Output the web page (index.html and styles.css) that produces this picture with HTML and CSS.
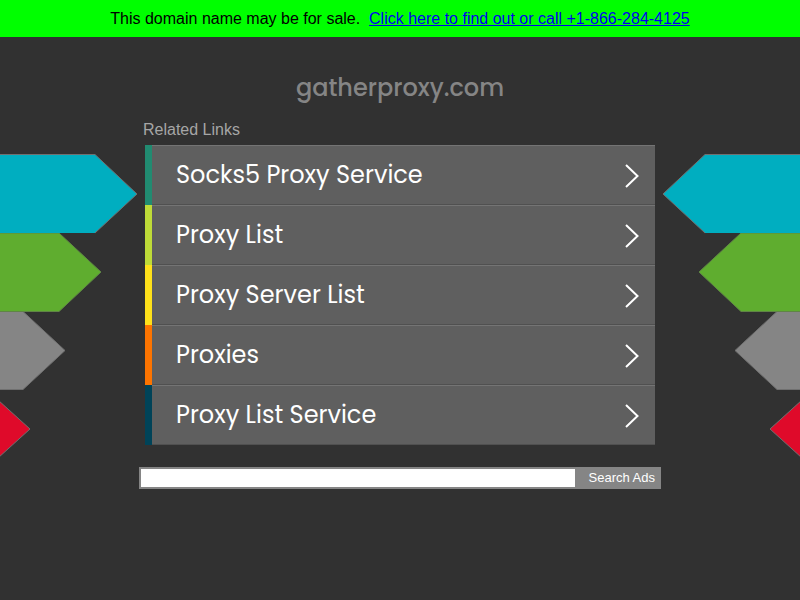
FILE: index.html
```html
<!DOCTYPE html>
<html lang="en">
<head>
<meta charset="utf-8">
<title>gatherproxy.com</title>
<link rel="stylesheet" href="styles.css">
</head>
<body>
<p class="sale-banner">This domain name may be for sale.&nbsp; <a href="#">Click here to find out or call +1-866-284-4125</a></p>
<div class="stage">
  <svg class="arrows" viewBox="0 0 138 304" aria-hidden="true">
    <g stroke="#707070" stroke-width="1">
      <path fill="#858585" d="M-2 157.500H23L65 196.500 23 235.500H-2z"/>
      <path fill="#5fad2f" d="M-2 79H59L101 118 59 157.500H-2z" stroke="#5f8545"/>
      <path fill="#00aec0" stroke="none" d="M-2 .5H95L137 40 95 79H-2z"/>
      <path fill="none" d="M-2 .5H95L137 40 95 79"/>
      <path fill="#df0a2a" d="M-2 246L30 275-2 304z"/>
    </g>
  </svg>
  <main class="content">
    <h1 class="domain">gatherproxy.com</h1>
    <h2 class="related">Related Links</h2>
    <ul class="links">
      <li class="item teal"><a href="#">Socks5 Proxy Service<svg class="chevron" viewBox="0 0 14 24" aria-hidden="true"><path d="M1 1L12.500 12 1 23"/></svg></a></li>
      <li class="item lime"><a href="#">Proxy List<svg class="chevron" viewBox="0 0 14 24" aria-hidden="true"><path d="M1 1L12.500 12 1 23"/></svg></a></li>
      <li class="item yellow"><a href="#">Proxy Server List<svg class="chevron" viewBox="0 0 14 24" aria-hidden="true"><path d="M1 1L12.500 12 1 23"/></svg></a></li>
      <li class="item orange"><a href="#">Proxies<svg class="chevron" viewBox="0 0 14 24" aria-hidden="true"><path d="M1 1L12.500 12 1 23"/></svg></a></li>
      <li class="item navy"><a href="#">Proxy List Service<svg class="chevron" viewBox="0 0 14 24" aria-hidden="true"><path d="M1 1L12.500 12 1 23"/></svg></a></li>
    </ul>
    <form class="search">
      <input type="text" aria-label="Search Ads">
      <button type="button">Search Ads</button>
    </form>
  </main>
  <svg class="arrows right" viewBox="0 0 138 304" aria-hidden="true">
    <g stroke="#707070" stroke-width="1">
      <path fill="#858585" d="M140 157.500H115L73 196.500 115 235.500H140z"/>
      <path fill="#5fad2f" d="M140 79H79L37 118 79 157.500H140z" stroke="#5f8545"/>
      <path fill="#00aec0" stroke="none" d="M140 .5H43L1 40 43 79H140z"/>
      <path fill="none" d="M140 .5H43L1 40 43 79"/>
      <path fill="#df0a2a" d="M140 246L108 275 140 304z"/>
    </g>
  </svg>
</div>
</body>
</html>
```
FILE: styles.css
```css
* { box-sizing: border-box; }

body {
  margin: 0;
  min-height: 100vh;
  background: #313131;
  font-family: "Liberation Sans", Arial, sans-serif;
}

.sale-banner {
  margin: 0;
  padding: 9px;
  background: #00ff00;
  color: #000;
  font-size: 16px;
  line-height: 19px;
  text-align: center;
}

.sale-banner a { color: #0000ee; }

.stage {
  display: grid;
  grid-template-columns: 1fr minmax(0, 522px) 1fr;
  overflow: hidden;
}

.arrows {
  width: 138px;
  height: 304px;
  margin-top: 117px;
}

.right { justify-self: end; }

.content { padding-top: 33px; }

.domain {
  margin: 0;
  color: #858585;
  font: 500 24px/36px Poppins, Inter, sans-serif;
  text-align: center;
}

.related {
  margin: 14px 4px 6px;
  color: #a6a6a6;
  font-size: 16px;
  font-weight: 400;
  line-height: 19px;
}

.links {
  margin: 0 6px;
  padding: 0;
  list-style: none;
}

.item a {
  display: flex;
  align-items: center;
  justify-content: space-between;
  height: 60px;
  padding: 0 16px 0 24px;
  border-top: 1px solid #747474;
  border-bottom: 1px solid #505050;
  background: #5f5f5f;
  color: #fff;
  font: 400 24px/36px Poppins, Inter, sans-serif;
  text-decoration: none;
}

.item { padding-left: 7px; }
.teal { background: #218b71; }
.lime { background: #bfdb38; }
.yellow { background: #ffe11a; }
.orange { background: #fd7400; }
.navy { background: #004358; }

.chevron {
  width: 14px;
  height: 24px;
  margin-top: 2px;
  fill: none;
  stroke: #fff;
  stroke-width: 2;
}

.search {
  display: flex;
  height: 22px;
  margin-top: 22px;
  border: 2px solid #858585;
  background: #858585;
}

.search input {
  flex: 1;
  min-width: 0;
  padding: 0 4px;
  border: 0;
  background: #fff;
  font: 13px "Liberation Sans", Arial, sans-serif;
}

.search button {
  width: 84px;
  padding: 0 4px 1px 0;
  border: 0;
  background: #858585;
  color: #fff;
  font: 13px "Liberation Sans", Arial, sans-serif;
  text-align: right;
}
```
